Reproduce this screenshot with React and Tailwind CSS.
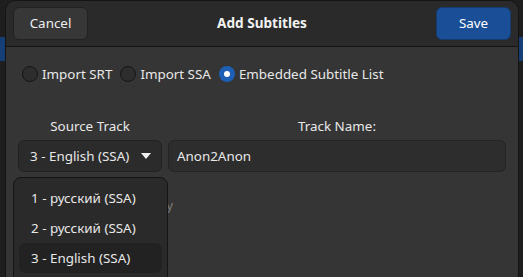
import { useState } from "react";

const tracks = ["1 - русский (SSA)", "2 - русский (SSA)", "3 - English (SSA)"];

const Radio = ({ checked, label }) => (
  <label className="flex items-center gap-[4px]">
    {checked ? (
      <span className="w-[16px] h-[16px] rounded-full bg-[#1c5fb4] flex items-center justify-center">
        <span className="w-[6px] h-[6px] rounded-full bg-white" />
      </span>
    ) : (
      <span className="w-[16px] h-[16px] rounded-full border border-[#151515] bg-[#2d2d2d]" />
    )}
    <span>{label}</span>
  </label>
);

export default function App() {
  const [selected] = useState(2);

  return (
    <div className="relative w-[523px] h-[277px] overflow-hidden bg-[#1e1e1e] text-[13.4px] text-[#e8e8e8] font-['Noto_Sans',sans-serif]">
      {/* window strips behind the dialog */}
      <div className="absolute left-0 top-[37px] w-full h-[24px] bg-[#163f78]" />

      <div className="relative ml-[5px] w-[514px] h-[290px] rounded-t-[11px] border border-[#141414] bg-[#353535] overflow-hidden">
        {/* header */}
        <div className="flex items-center justify-between h-[46px] px-[7px] bg-[#2a2a2a] border-b border-[#151515]">
          <button className="w-[75px] h-[33px] rounded-[6px] bg-[#373737] border border-[#222] text-[#eee]">
            Cancel
          </button>
          <div className="font-bold text-[13.6px] text-[#f2f2f2]">Add Subtitles</div>
          <button className="w-[75px] h-[33px] rounded-[6px] bg-[#1a4f97] border border-[#143a6e] text-white">
            Save
          </button>
        </div>

        {/* body */}
        <div className="px-[12px] pt-[17px]">
          <div className="flex items-center gap-[8px] h-[20px] pl-[4px]">
            <Radio label="Import SRT" />
            <Radio label="Import SSA" />
            <Radio checked label="Embedded Subtitle List" />
          </div>

          <div className="flex gap-[6px] mt-[33px]">
            <div className="flex flex-col items-center w-[144px]">
              <div className="h-[19px] leading-[19px]">Source Track</div>
              <button className="mt-[4px] w-[144px] h-[32px] flex items-center justify-between pl-[11px] pr-[10px] rounded-[6px] bg-[#2b2b2b] border border-[#222]">
                <span>{tracks[selected]}</span>
                <svg width="10" height="6" viewBox="0 0 10 6">
                  <path d="M0 0h10L5 6z" fill="#f0f0f0" />
                </svg>
              </button>
            </div>
            <div className="flex flex-col items-center flex-1">
              <div className="h-[19px] leading-[19px]">Track Name:</div>
              <div className="mt-[4px] w-full h-[32px] flex items-center pl-[8px] rounded-[6px] bg-[#2d2d2d] border border-[#242424]">
                Anon2Anon
              </div>
            </div>
          </div>

          <div className="mt-[23px] w-[155px] text-right text-[#7a7a7a]">Forced Only</div>
        </div>

        {/* dropdown popover */}
        <div className="absolute left-[7px] top-[176px] w-[155px] h-[110px] rounded-[8px] bg-[#2a2a2a] border border-[#151515] px-[5px] pt-[5px]">
          {tracks.map((t, i) => (
            <div
              key={t}
              className={`h-[30px] flex items-center pl-[12px] rounded-[6px] ${
                i === selected ? "bg-[#222222]" : ""
              }`}
            >
              {t}
            </div>
          ))}
        </div>
      </div>
    </div>
  );
}
